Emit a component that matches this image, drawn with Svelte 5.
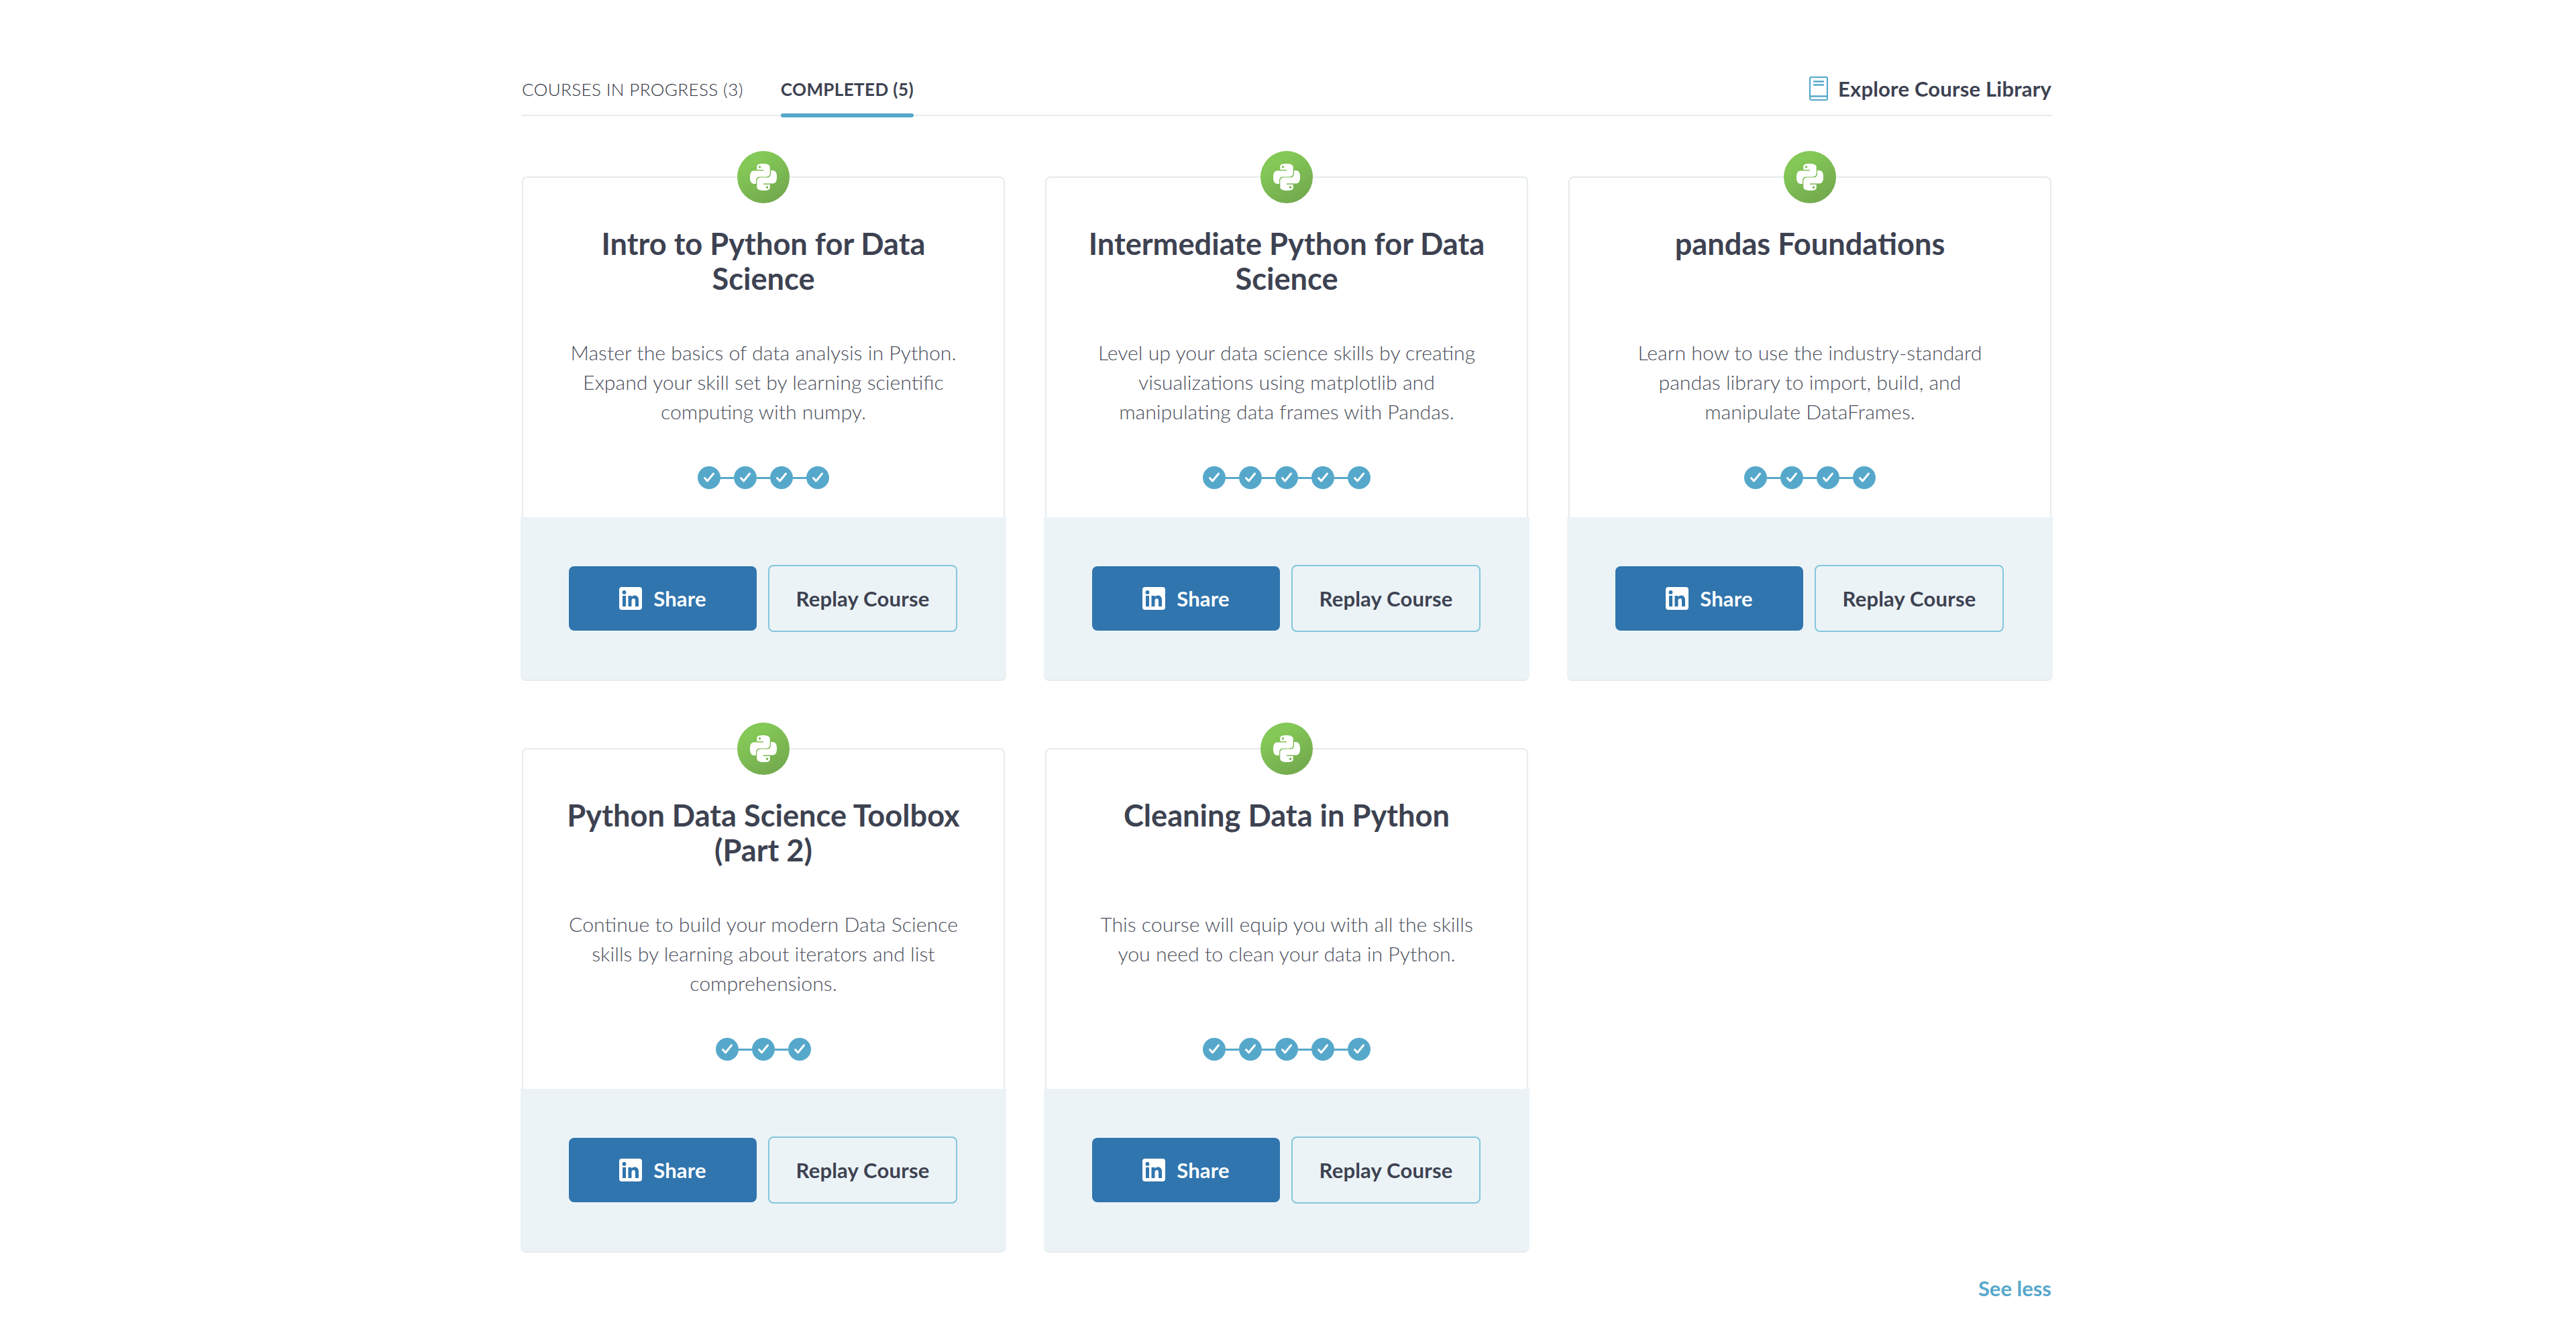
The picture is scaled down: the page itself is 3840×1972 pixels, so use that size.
<script>
	const courses = [
		{
			title: 'Intro to Python for Data Science',
			text: 'Master the basics of data analysis in Python. Expand your skill set by learning scientific computing with numpy.',
			chapters: 4
		},
		{
			title: 'Intermediate Python for Data Science',
			text: 'Level up your data science skills by creating visualizations using matplotlib and manipulating data frames with Pandas.',
			chapters: 5
		},
		{
			title: 'pandas Foundations',
			text: 'Learn how to use the industry-standard pandas library to import, build, and manipulate DataFrames.',
			chapters: 4
		},
		{
			title: 'Python Data Science Toolbox (Part 2)',
			text: 'Continue to build your modern Data Science skills by learning about iterators and list comprehensions.',
			chapters: 3
		},
		{
			title: 'Cleaning Data in Python',
			text: 'This course will equip you with all the skills you need to clean your data in Python.',
			chapters: 5
		}
	];
</script>

<main class="page">
	<nav class="tabs">
		<a class="tab" href="#progress">COURSES IN PROGRESS (3)</a>
		<a class="tab active" href="#completed">COMPLETED (5)</a>
		<a class="library" href="#library">
			<svg class="book" viewBox="0 0 28 36" aria-hidden="true">
				<path d="M3.5 1h21.5a2 2 0 0 1 2 2v30a2 2 0 0 1-2 2H3.5A2.5 2.5 0 0 1 1 32.500V3.500A2.500 2.500 0 0 1 3.500 1z" fill="none" stroke="#56a8cb" stroke-width="2.200" />
				<path d="M2 29.500h25" fill="none" stroke="#56a8cb" stroke-width="2.500" />
				<path d="M7 7.500h14M7 12.500h14" fill="none" stroke="#56a8cb" stroke-width="2.500" stroke-linecap="round" />
			</svg>
			Explore Course Library
		</a>
	</nav>

	<section class="grid">
		{#each courses as course}
			<article class="card">
				<div class="badge">
					<svg viewBox="0 0 24 24" aria-hidden="true">
						<path d="M14.25.18l.9.2.73.26.59.3.45.32.34.34.25.34.16.33.1.3.04.26.02.2-.01.13V8.500l-.05.63-.13.55-.21.46-.26.38-.3.31-.33.25-.35.19-.35.14-.33.1-.3.07-.26.04-.21.02H8.770l-.69.05-.59.14-.5.22-.41.27-.33.32-.27.35-.2.36-.15.37-.1.35-.07.32-.04.27-.02.21v3.060H3.170l-.21-.03-.28-.07-.32-.12-.35-.18-.36-.26-.36-.36-.35-.46-.32-.59-.28-.73-.21-.88-.14-1.050-.05-1.230.06-1.220.16-1.040.24-.87.32-.71.36-.57.4-.44.42-.33.42-.24.4-.16.36-.1.32-.05.24-.01h.16l.06.01h8.160v-.83H6.180l-.01-2.750-.02-.37.05-.34.11-.31.17-.28.25-.26.31-.23.38-.2.44-.18.51-.15.58-.12.64-.1.71-.06.77-.04.84-.02 1.270.05zm-6.300 1.980l-.23.33-.08.41.08.41.23.34.33.22.41.09.41-.09.33-.22.23-.34.08-.41-.08-.41-.23-.33-.33-.22-.41-.09-.41.09zm13.090 3.950l.28.06.32.12.35.18.36.27.36.35.35.47.32.59.28.73.21.88.14 1.040.05 1.230-.06 1.230-.16 1.040-.24.86-.32.71-.36.57-.4.45-.42.33-.42.24-.4.16-.36.09-.32.05-.24.02-.16-.01h-8.220v.82h5.840l.01 2.760.02.36-.05.34-.11.31-.17.29-.25.25-.31.24-.38.2-.44.17-.51.15-.58.13-.64.09-.71.07-.77.04-.84.01-1.270-.04-1.070-.14-.9-.2-.73-.25-.59-.3-.45-.33-.34-.34-.25-.34-.16-.33-.1-.3-.04-.25-.02-.2.01-.13v-5.340l.05-.64.13-.54.21-.46.26-.38.3-.32.33-.24.35-.2.35-.14.33-.1.3-.06.26-.04.21-.02.13-.01h5.840l.69-.05.59-.14.5-.21.41-.28.33-.32.27-.35.2-.36.15-.36.1-.35.07-.32.04-.28.02-.21V6.070h2.090l.14.01zm-6.470 14.250l-.23.33-.08.41.08.41.23.33.33.23.41.08.41-.08.33-.23.23-.33.08-.41-.08-.41-.23-.33-.33-.23-.41-.08-.41.08z" fill="#fff" />
					</svg>
				</div>

				<div class="body">
					<h3>{course.title}</h3>
					<p>{course.text}</p>
					<div class="steps">
						{#each Array(course.chapters) as _}
							<span class="step">
								<svg viewBox="0 0 34 34" aria-hidden="true">
									<path d="M10.500 17.500l4 4.500 9-11" fill="none" stroke="#fff" stroke-width="3" stroke-linecap="round" stroke-linejoin="round" />
								</svg>
							</span>
						{/each}
					</div>
				</div>

				<div class="actions">
					<button type="button" class="share">
						<svg viewBox="0 0 34 34" aria-hidden="true">
							<path fill-rule="evenodd" d="M4 0h26a4 4 0 0 1 4 4v26a4 4 0 0 1-4 4H4a4 4 0 0 1-4-4V4a4 4 0 0 1 4-4zM5 13v16h5V13zM7.500 5a2.900 2.900 0 1 0 0 5.800 2.900 2.900 0 0 0 0-5.800zM13.500 13v16h5v-8.500c0-2.300 1-3.600 2.900-3.600s2.600 1.300 2.600 3.600V29h5v-9.700c0-4.400-2.400-6.700-5.800-6.700-2.300 0-3.900 1-4.800 2.500V13z" fill="#fff" />
						</svg>
						Share
					</button>
					<button type="button" class="replay">Replay Course</button>
				</div>
			</article>
		{/each}
	</section>

	<div class="more"><a href="#less">See less</a></div>
</main>

<style>
	:global(body) {
		background: #fff;
		font-family: Lato, 'Open Sans', sans-serif;
	}
	a {
		text-decoration: none;
	}
	.page {
		width: 2280px;
		margin-left: 778px;
		padding-top: 113px;
	}
	.tabs {
		display: flex;
		align-items: flex-start;
		height: 58px;
		border-bottom: 2px solid #e6ebeb;
		color: #3d4251;
	}
	.tab {
		position: relative;
		height: 58px;
		margin-right: 56px;
		font-size: 26px;
		letter-spacing: 0.4px;
		line-height: 40px;
		color: #2f3340;
		font-weight: 300;
	}
	.tab.active {
		color: #3d4251;
		font-weight: 700;
	}
	.tab.active::after {
		content: '';
		position: absolute;
		left: 0;
		right: 0;
		bottom: -4px;
		height: 6px;
		border-radius: 3px;
		background: #56a8cb;
	}
	.library {
		display: flex;
		align-items: center;
		gap: 15px;
		margin-left: auto;
		height: 38px;
		color: #3d4251;
		font-size: 31px;
		letter-spacing: 0.2px;
		font-weight: 700;
	}
	.book {
		width: 28px;
		height: 36px;
	}
	.grid {
		display: grid;
		grid-template-columns: repeat(3, 720px);
		column-gap: 60px;
		row-gap: 100px;
		margin-top: 90px;
	}
	.card {
		position: relative;
		display: flex;
		flex-direction: column;
		height: 752px;
		box-sizing: border-box;
		border: 2px solid #e6ebeb;
		border-radius: 8px;
	}
	.badge {
		position: absolute;
		top: -40px;
		left: 319px;
		display: flex;
		align-items: center;
		justify-content: center;
		width: 78px;
		height: 78px;
		border-radius: 50%;
		background: linear-gradient(150deg, #84c857 25%, #6fa34c 100%);
	}
	.badge svg {
		width: 40px;
		height: 40px;
	}
	.body {
		flex: 1;
		padding: 72px 58px 0;
		text-align: center;
	}
	h3 {
		margin: 0 0 62px;
		min-height: 104px;
		font-size: 45.2px;
		line-height: 52px;
		font-weight: 700;
		color: #3d4251;
	}
	p {
		margin: 0;
		min-height: 132px;
		font-size: 30.25px;
		line-height: 44px;
		font-weight: 300;
		color: #4b4f5c;
	}
	.steps {
		display: flex;
		justify-content: center;
		gap: 20px;
		margin-top: 60px;
	}
	.step {
		position: relative;
		width: 34px;
		height: 34px;
		border-radius: 50%;
		background: #56a8cb;
	}
	.step svg {
		display: block;
		width: 34px;
		height: 34px;
	}
	.step:not(:last-child)::after {
		content: '';
		position: absolute;
		left: 34px;
		top: 16px;
		width: 20px;
		height: 3px;
		background: #56a8cb;
	}
	.actions {
		display: flex;
		align-items: center;
		gap: 17px;
		height: 244px;
		box-sizing: border-box;
		margin: 0 -4px -2px;
		padding: 0 72px;
		border-bottom: 2px solid #e6ebeb;
		border-radius: 0 0 8px 8px;
		background: #ebf3f7;
	}
	button {
		font-family: inherit;
		font-size: 31px;
		letter-spacing: 0.2px;
		font-weight: 700;
		cursor: pointer;
	}
	.share {
		display: flex;
		align-items: center;
		justify-content: center;
		gap: 17px;
		width: 280px;
		height: 96px;
		border: 0;
		border-radius: 8px;
		background: #3075ae;
		color: #fff;
	}
	.share svg {
		width: 34px;
		height: 34px;
	}
	.replay {
		width: 282px;
		height: 100px;
		border: 2px solid #85c6dc;
		border-radius: 8px;
		background: transparent;
		color: #3d4251;
	}
	.more {
		margin-top: 33px;
		text-align: right;
		font-size: 31px;
		line-height: 40px;
		font-weight: 700;
	}
	.more a {
		color: #56a8cb;
	}
</style>
